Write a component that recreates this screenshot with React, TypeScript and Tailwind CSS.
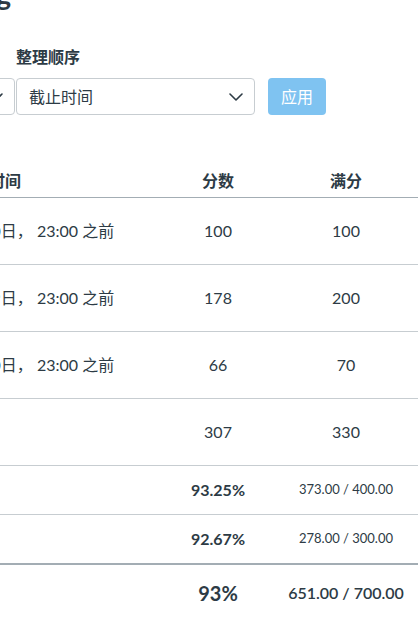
import React from "react";

const Chevron = () => (
  <svg width="14" height="8" viewBox="0 0 14 8" fill="none" className="shrink-0">
    <path d="M1 1l6 6 6-6" stroke="#2d3b45" strokeWidth="1.6" strokeLinecap="round" strokeLinejoin="round" />
  </svg>
);

const rows = [
  { due: "9月30日， 23:00 之前", score: "100", out: "100" },
  { due: "9月29日， 23:00 之前", score: "178", out: "200" },
  { due: "9月30日， 23:00 之前", score: "66", out: "70" },
];

export default function App() {
  return (
    <div className="w-[418px] h-[618px] overflow-hidden bg-white text-[#2d3b45] font-['Lato','Noto_Sans_CJK_SC',sans-serif]">
      {/* heading tail */}
      <div className="h-[16px] w-[11px] flex justify-end">
        <h1 className="whitespace-nowrap text-[28px] leading-[28px] font-bold -mt-[20px]">Grades for Testing</h1>
      </div>

      {/* sort controls */}
      <div className="mt-[31px] flex items-end">
        <div className="w-[30px] h-[37px] border border-[#c7cdd1] rounded-[4px] -ml-[15px] mr-[1px] flex items-center justify-end pr-[11px] overflow-hidden shrink-0">
          <Chevron />
        </div>
        <div className="flex flex-col">
          <div className="text-[16px] leading-[20px] font-bold mb-[11px]">整理顺序</div>
          <div className="flex items-center">
            <div className="w-[239px] h-[37px] border border-[#c7cdd1] rounded-[4px] flex items-center justify-between pl-[12px] pr-[11px] text-[16px]">
              <span>截止时间</span>
              <Chevron />
            </div>
            <div className="ml-[13px] w-[58px] h-[37px] rounded-[4px] bg-[#7fc3f1] text-white text-[16px] flex items-center justify-center">
              应用
            </div>
          </div>
        </div>
      </div>

      {/* table */}
      <div className="mt-[56px] -ml-[43px] w-[480px] text-[16px]">
        <div className="grid grid-cols-[200px_122px_134px_1fr] border-b border-[#a3adb4] pb-[6px] leading-[20px] font-bold">
          <div className="whitespace-nowrap">截止时间</div>
          <div className="text-center">分数</div>
          <div className="text-center">满分</div>
          <div />
        </div>
        {rows.map((r, i) => (
          <div key={i} className="grid grid-cols-[200px_122px_134px_1fr] h-[67px] items-center border-b border-[#c7cdd1]">
            <div className="whitespace-nowrap">{r.due}</div>
            <div className="text-center">{r.score}</div>
            <div className="text-center">{r.out}</div>
            <div />
          </div>
        ))}
        <div className="grid grid-cols-[200px_122px_134px_1fr] h-[67px] items-center border-b border-[#c7cdd1]">
          <div />
          <div className="text-center">307</div>
          <div className="text-center">330</div>
          <div />
        </div>
        <div className="grid grid-cols-[200px_122px_134px_1fr] h-[49px] items-center border-b border-[#c7cdd1]">
          <div />
          <div className="text-center font-bold">93.25%</div>
          <div className="text-center text-[13px]">373.00 / 400.00</div>
          <div />
        </div>
        <div className="grid grid-cols-[200px_122px_134px_1fr] h-[50px] items-center border-b-2 border-[#a3adb4]">
          <div />
          <div className="text-center font-bold">92.67%</div>
          <div className="text-center text-[13px]">278.00 / 300.00</div>
          <div />
        </div>
        <div className="grid grid-cols-[200px_122px_134px_1fr] h-[56px] items-center">
          <div />
          <div className="text-center font-bold text-[20px]">93%</div>
          <div className="text-center font-semibold">651.00 / 700.00</div>
          <div />
        </div>
      </div>
    </div>
  );
}
